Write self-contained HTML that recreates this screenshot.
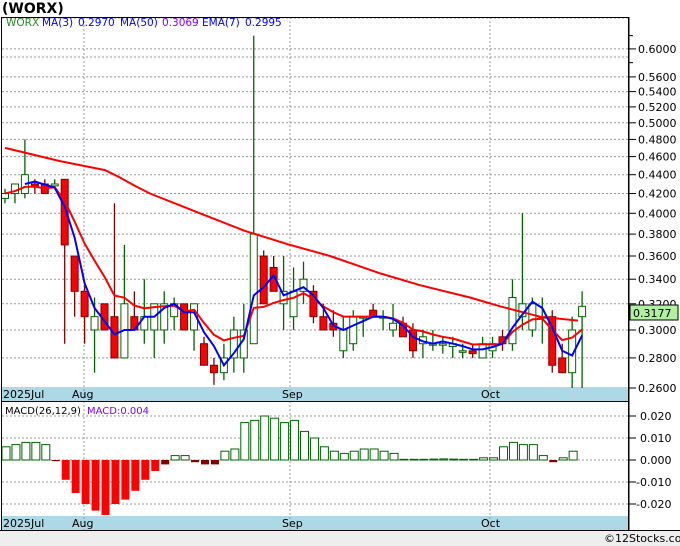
<!DOCTYPE html>
<html><head><meta charset="utf-8">
<style>
html,body{margin:0;padding:0;background:#fff;width:680px;height:546px;overflow:hidden;font-family:"DejaVu Sans","Liberation Sans",sans-serif}
svg text{font-family:"DejaVu Sans","Liberation Sans",sans-serif}
</style></head><body>
<svg id="s" width="680" height="546" xmlns="http://www.w3.org/2000/svg">
<rect x="0" y="0" width="680" height="546" fill="#fff"/>
<rect x="0" y="531" width="680" height="15" fill="#eeeeee"/>
<text x="2" y="13" font-size="14" font-weight="bold" fill="#000">(WORX)</text>
<g id="g"></g>
<text x="6" y="26" font-size="10.5" fill="#2a8a2a">WORX</text>
<text x="42" y="26" font-size="10.5" fill="#0000ff">MA(3)</text>
<text x="78" y="26" font-size="10.5" fill="#0000ff">0.2970</text>
<text x="120" y="26" font-size="10.5" fill="#0000ff">MA(50)</text>
<text x="162" y="26" font-size="10.5" fill="#8000ff">0.3069</text>
<text x="202" y="26" font-size="10.5" fill="#0000ff">EMA(7)</text>
<text x="245" y="26" font-size="10.5" fill="#0000ff">0.2995</text>
<text x="5" y="414" font-size="10" fill="#000">MACD(26,12,9)</text>
<text x="87" y="414" font-size="10" fill="#8000ff">MACD:0.004</text>
<text x="604" y="542" font-size="11" fill="#000">©12Stocks.com</text>
</svg>
<script>
var g=document.getElementById('g'),h='';
function L(p){return 388-405.5*(Math.log(p)-Math.log(0.26));}
h+='<rect x="2" y="387" width="627" height="14" fill="#add8e6"/>';
h+='<rect x="2" y="516" width="627" height="14" fill="#add8e6"/>';
var pr=[0.26,0.28,0.30,0.32,0.34,0.36,0.38,0.40,0.42,0.44,0.46,0.48,0.50,0.52,0.54,0.56,0.60];
pr.forEach(function(p){var y=L(p).toFixed(1);
 if(p>0.26)h+='<line x1="2" x2="629" y1="'+y+'" y2="'+y+'" stroke="#999" stroke-dasharray="2,2"/>';
 h+='<line x1="629" x2="636" y1="'+y+'" y2="'+y+'" stroke="#000"/>';
 h+='<text x="638" y="'+(L(p)+4).toFixed(1)+'" font-size="11" fill="#000">'+p.toFixed(4)+'</text>';});
[0.58,0.62].forEach(function(p){var y=L(p);h+='<line x1="629" x2="633" y1="'+y+'" y2="'+y+'" stroke="#000"/>';});
h+='<line x1="2" x2="629" y1="57" y2="57" stroke="#999" stroke-dasharray="2,2"/>';
h+='<line x1="2" x2="629" y1="18" y2="18" stroke="#999" stroke-dasharray="2,2"/>';
[84,290,490].forEach(function(x){h+='<line x1="'+x+'" x2="'+x+'" y1="17" y2="530" stroke="#999" stroke-dasharray="2,2"/>';});
var mz=460,ms=2.2;
[0.02,0.01,0,-0.01,-0.02].forEach(function(v){var y=mz-v*1000*ms;
 h+='<line x1="2" x2="629" y1="'+y+'" y2="'+y+'" stroke="#999" stroke-dasharray="2,2"/>';
 h+='<line x1="629" x2="636" y1="'+y+'" y2="'+y+'" stroke="#000"/>';
 h+='<text x="'+(v<0?636:640)+'" y="'+(y+4)+'" font-size="11" fill="#000">'+(v<0?'-':'')+Math.abs(v).toFixed(3)+'</text>';});
var D=[[.415,.425,.41,.42],[.42,.43,.41,.43],[.42,.48,.415,.44],[.43,.435,.42,.428],[.43,.435,.42,.42],[.428,.435,.425,.43],
[.435,.435,.29,.37],[.36,.36,.31,.33],[.33,.335,.29,.31],[.30,.325,.27,.31],[.32,.32,.30,.30],[.31,.41,.28,.28],[.28,.37,.28,.32],
[.31,.33,.30,.30],[.30,.34,.29,.31],[.30,.32,.28,.32],[.30,.33,.29,.32],[.31,.325,.30,.32],[.32,.32,.30,.30],[.30,.32,.285,.32],
[.29,.295,.275,.275],[.275,.28,.262,.27],[.27,.29,.265,.28],[.28,.31,.27,.30],[.28,.32,.27,.30],[.29,.62,.29,.38],[.36,.365,.32,.32],
[.35,.36,.33,.33],[.32,.36,.30,.33],[.31,.35,.30,.33],[.33,.355,.32,.34],[.33,.335,.305,.31],[.31,.32,.30,.30],[.305,.315,.295,.30],
[.285,.31,.28,.30],[.29,.315,.285,.31],[.31,.31,.295,.31],[.315,.32,.31,.31],[.31,.315,.30,.31],[.30,.32,.295,.305],[.305,.31,.295,.295],
[.30,.305,.28,.285],[.29,.30,.28,.295],[.29,.30,.285,.29],[.29,.295,.283,.29],[.288,.295,.28,.29],[.285,.29,.28,.285],[.285,.29,.28,.283],
[.28,.295,.28,.29],[.285,.295,.28,.29],[.295,.30,.285,.29],[.29,.34,.285,.325],[.31,.40,.30,.32],[.30,.325,.295,.32],[.31,.325,.29,.31],
[.31,.315,.27,.275],[.28,.29,.27,.27],[.27,.31,.26,.30],[.31,.33,.26,.318]];
var X=[];for(var i=0;i<D.length;i++)X.push(5+i*9.95);
D.forEach(function(d,i){var x=X[i],o=d[0],hi=d[1],lo=d[2],c=d[3],up=c>=o;
 var col=up?'#006400':'#800000';
 h+='<line x1="'+x+'" x2="'+x+'" y1="'+L(hi)+'" y2="'+Math.min(L(lo),388)+'" stroke="'+col+'" stroke-width="1.3"/>';
 var y1=L(Math.max(o,c)),y2=L(Math.min(o,c));if(y2-y1<1.5)y2=y1+1.5;
 h+='<rect x="'+(x-3.5)+'" y="'+y1+'" width="7" height="'+(y2-y1)+'" fill="'+(up?'#fff':'#ff0000')+'" stroke="'+col+'"/>';});
var m50=[[5,.47],[60,.455],[105,.445],[118,.438],[135,.428],[150,.42],[200,.40],[245,.383],[290,.37],[330,.36],[380,.345],[420,.335],[470,.325],[500,.318],[540,.31],[578,.307]];
h+='<polyline fill="none" stroke="#ff0000" stroke-width="2" points="'+m50.map(function(p){return p[0]+','+L(p[1]).toFixed(1)}).join(' ')+'"/>';
var e=D[0][3],ep=[],mp=[];
D.forEach(function(d,i){e=e+(d[3]-e)*0.25;ep.push(X[i]+','+L(e).toFixed(1));
 if(i>=2){var m=(D[i][3]+D[i-1][3]+D[i-2][3])/3;mp.push(X[i]+','+L(m).toFixed(1));}});
h+='<polyline fill="none" stroke="#ff0000" stroke-width="2" points="'+ep.join(' ')+'"/>';
h+='<polyline fill="none" stroke="#0000ff" stroke-width="2" points="'+mp.join(' ')+'"/>';
h+='<rect x="630" y="305" width="48" height="15" fill="#b0f0a0" stroke="#000"/><text x="633" y="317" font-size="11" fill="#000">0.3177</text>';
var M=[6,7,8,8,7,-.5,-9,-15,-20,-23,-25,-20,-18,-14,-9,-5,-2,2,2,-1,-2,-2,4,5,17,18,20,19,17,18,13,10,6,4,3,4,5,5,4,3,.3,.3,.3,.4,.5,.4,.3,.3,1,1,6,8,7,7,2,-1,1,4];
M.forEach(function(v,i){var x=X[i]+1,y=mz-v*ms,hh=Math.abs(v*ms);
 if(v>=0){h+='<rect x="'+(x-4)+'" y="'+y+'" width="8" height="'+Math.max(hh,.5)+'" fill="#fff" stroke="#006400"/>';}
 else{var t=Math.min(hh,55);h+='<rect x="'+(x-4)+'" y="'+mz+'" width="8" height="'+t+'" fill="'+(v>-3?'#800000':'#ff0000')+'"/>';}});
['2025Jul@3','Aug@72','Sep@282','Oct@481'].forEach(function(s){var a=s.split('@');
 h+='<text x="'+a[1]+'" y="398" font-size="11" fill="#000">'+a[0]+'</text>';
 h+='<text x="'+a[1]+'" y="527" font-size="11" fill="#000">'+a[0]+'</text>';});
h+='<rect x="1.5" y="17.5" width="627" height="384" fill="none" stroke="#000"/>';
h+='<rect x="1.5" y="401.5" width="627" height="129" fill="none" stroke="#000"/>';
h+='<line x1="629" x2="629" y1="17" y2="531" stroke="#000"/>';
h+='<line x1="0" x2="680" y1="530.5" y2="530.5" stroke="#000"/>';
g.innerHTML=h;
</script>
</body></html>
